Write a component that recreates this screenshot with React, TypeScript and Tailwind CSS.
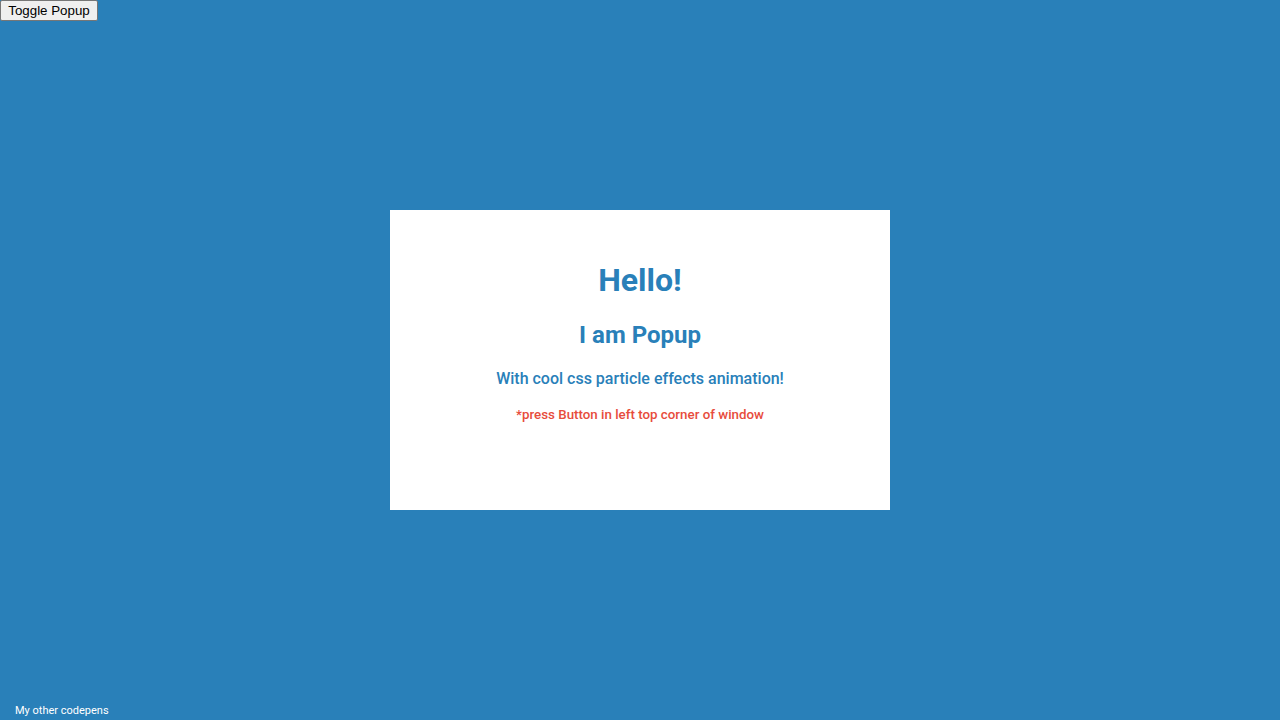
export default function App() {
  return (
    <div className="relative flex h-screen w-full items-center justify-center overflow-hidden bg-[#2980b9] font-['Roboto',sans-serif]">
      <button className="absolute left-0 top-0 h-[21px] w-[98px] rounded-[2px] border border-[#767676] bg-[#efefef] px-0 font-['Liberation_Sans',Arial,sans-serif] text-[13.33px] leading-none text-black">
        Toggle Popup
      </button>

      <div className="flex h-[300px] w-[500px] flex-col items-center bg-white pt-[51px] text-center">
        <h1 className="text-[32px] font-bold leading-[1.2] text-[#2980b9]">Hello!</h1>
        <h2 className="mt-[22px] text-[24px] font-bold leading-[1.2] text-[#2980b9]">I am Popup</h2>
        <p className="mt-[19px] text-[16px] font-medium leading-[1.2] text-[#2980b9]">
          With cool css particle effects animation!
        </p>
        <p className="mt-[19px] text-[13.33px] font-medium leading-[1.2] text-[#e74c3c]">
          *press Button in left top corner of window
        </p>
      </div>

      <a className="absolute bottom-[2px] left-[15px] text-[11px] leading-[14px] text-white">
        My other codepens
      </a>
    </div>
  );
}
